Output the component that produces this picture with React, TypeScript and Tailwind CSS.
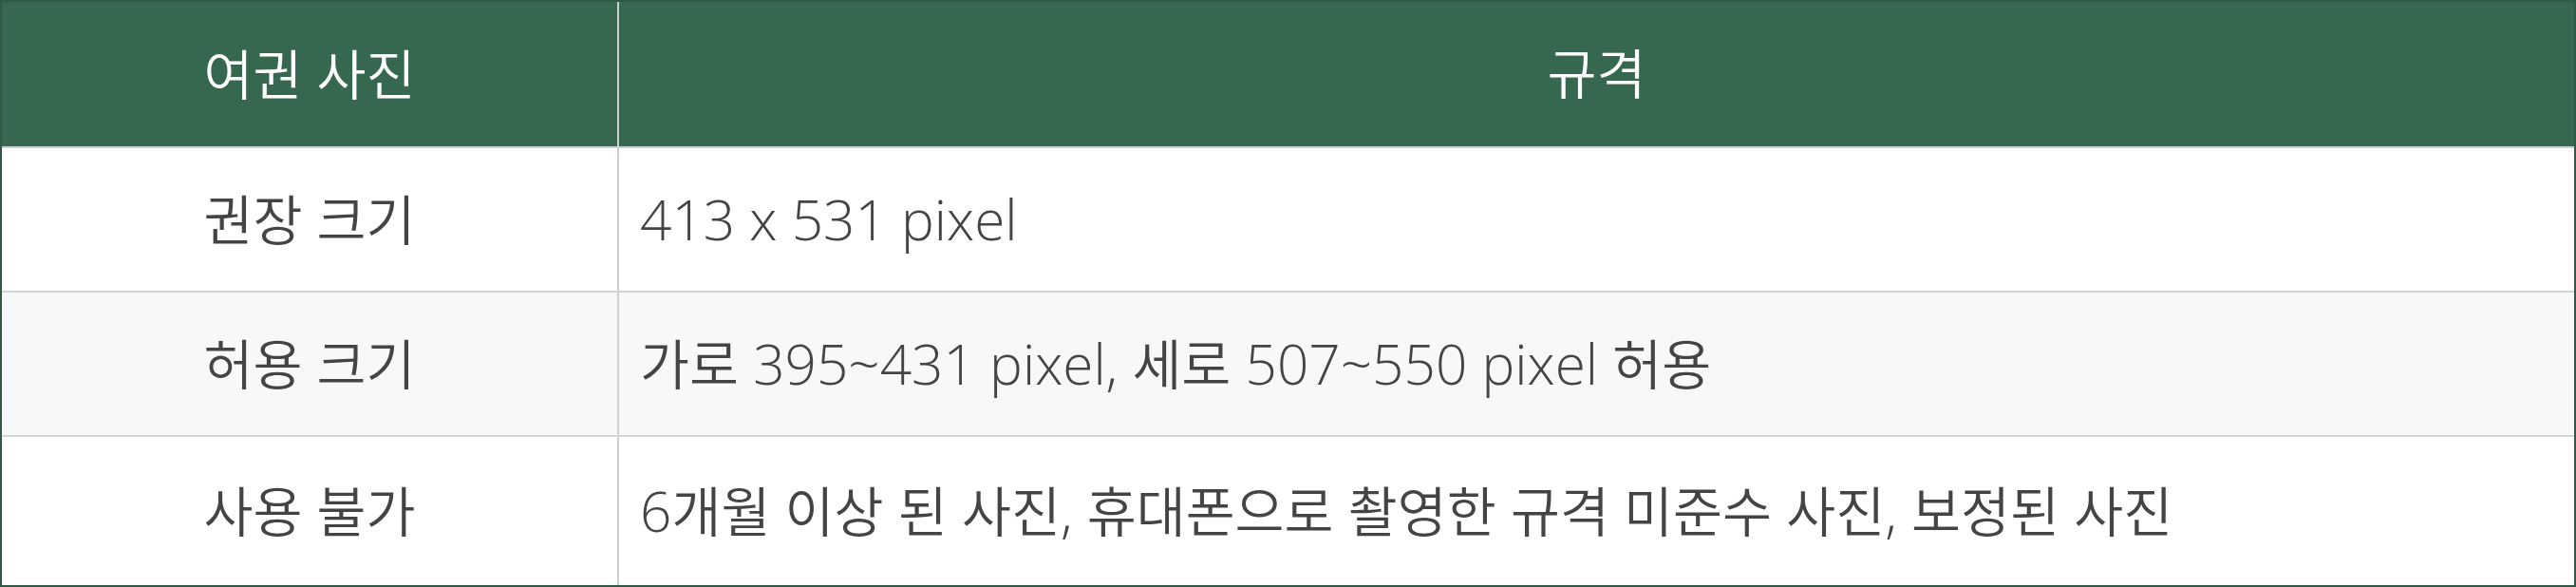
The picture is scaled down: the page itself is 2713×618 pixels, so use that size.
const rows = [
  { label: "권장 크기", value: "413 x 531 pixel", bg: "bg-white" },
  { label: "허용 크기", value: "가로 395~431 pixel, 세로 507~550 pixel 허용", bg: "bg-[#f7f8fa]" },
  { label: "사용 불가", value: "6개월 이상 된 사진, 휴대폰으로 촬영한 규격 미준수 사진, 보정된 사진", bg: "bg-white" },
];

// latin runs are set a touch larger than hangul, like the original mixed font
function Mixed({ text }: { text: string }) {
  const parts = text.split(/([가-힣]+)/).filter(Boolean);
  return (
    <span>
      {parts.map((p, i) =>
        /[가-힣]/.test(p) ? (
          <span key={i}>{p}</span>
        ) : (
          <span key={i} className="text-[58.5px]">
            {p}
          </span>
        )
      )}
    </span>
  );
}

export default function App() {
  return (
    <div
      className="w-[2713px] h-[618px] border-2 border-[#2e5a46] flex flex-col bg-white text-[56.5px] font-[350] leading-none"
      style={{ fontFamily: '"Open Sans", "Noto Sans CJK KR", sans-serif' }}
    >
      {/* Header */}
      <div className="h-[154px] flex bg-[#35684f] border-b-2 border-[#cdd1d3] text-white">
        <div className="w-[650px] border-r-2 border-[#cdd1d3] flex items-center justify-center">
          <Mixed text="여권 사진" />
        </div>
        <div className="flex-1 flex items-center justify-center">규격</div>
      </div>

      {/* Body */}
      {rows.map((r, i) => (
        <div
          key={r.label}
          className={`flex text-[#444] ${r.bg} ${
            i < rows.length - 1 ? "h-[152px] border-b-2 border-[#d3d5d7]" : "flex-1"
          }`}
        >
          <div className="w-[650px] border-r-2 border-[#cdd1d3] flex items-center justify-center">
            <Mixed text={r.label} />
          </div>
          <div className="flex-1 flex items-center pl-[22px]">
            <Mixed text={r.value} />
          </div>
        </div>
      ))}
    </div>
  );
}
